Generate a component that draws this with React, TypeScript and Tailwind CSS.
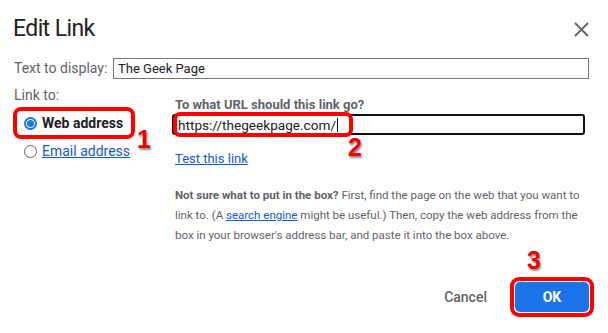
function Badge({ n, className }: { n: string; className: string }) {
  return (
    <span
      className={`absolute font-['Liberation_Sans',sans-serif] font-bold text-[25px] leading-none text-[#f00000] [-webkit-text-stroke:3px_white] [paint-order:stroke_fill] [text-shadow:1px_2px_2px_rgba(0,0,0,0.45)] ${className}`}
    >
      {n}
    </span>
  );
}

export default function App() {
  return (
    <div className="relative w-[608px] h-[333px] overflow-hidden bg-white font-['Roboto',sans-serif] text-[#202124]">
      {/* header */}
      <div className="flex h-[58px] items-start justify-between pl-[13px] pr-[19px] pt-[14px]">
        <h1 className="text-[23px] font-normal leading-[30px] tracking-[-0.6px] text-[#202124]">Edit Link</h1>
        <svg className="mt-[8px]" width="15" height="15" viewBox="0 0 15 15">
          <path d="M1 1L14 14M14 1L1 14" stroke="#5f6368" strokeWidth="1.8" />
        </svg>
      </div>

      {/* text to display */}
      <div className="flex items-center pl-[14px] pr-[19px]">
        <span className="w-[99px] text-[14px] leading-[21px] text-[#5f6368]">Text to display:</span>
        <div className="h-[21px] flex-1 border border-[#767676] px-[4px] text-[13px] leading-[19px] text-[#202124]">
          The Geek Page
        </div>
      </div>

      {/* body */}
      <div className="flex">
        <div className="w-[172px] pl-[13px]">
          <div className="mt-[8px] pl-[1px] text-[14px] leading-[16px] text-[#5f6368]">Link to:</div>
          <div className="relative mt-[4px] flex h-[32px] w-[122px] items-center gap-[5px] rounded-[8px] border-[4px] border-[#f00] pl-[7px]">
            <span className="flex h-[13px] w-[13px] items-center justify-center rounded-full border-2 border-[#1a73e8]">
              <span className="h-[7px] w-[7px] rounded-full bg-[#1a73e8]" />
            </span>
            <span className="text-[14px] font-bold leading-[18px] text-[#202124]">Web address</span>
            <Badge n="1" className="left-[120px] top-[16px]" />
          </div>
          <div className="mt-[2px] flex h-[20px] items-center gap-[5px] pl-[11px]">
            <span className="h-[13px] w-[13px] rounded-full border-[1.5px] border-[#5f6368]" />
            <span className="text-[14px] leading-[18px] text-[#1558d6] underline">Email address</span>
          </div>
        </div>

        <div className="w-[413px]">
          <div className="mt-[18px] pl-[3px] text-[13px] font-bold leading-[16px] text-[#5f6368]">
            To what URL should this link go?
          </div>
          <div className="relative mt-[1px] h-[21px] w-[413px] rounded-[3px] border-2 border-[#111] pl-[4px] text-[13.6px] leading-[17px] text-[#202124]">
            https://thegeekpage.com/<span className="ml-[1px] inline-block h-[14px] w-[1px] translate-y-[2px] bg-[#111]" />
            <span className="absolute left-[-1px] top-[-4px] h-[25px] w-[180px] rounded-[7px] border-[4px] border-[#f00]" />
            <Badge n="2" className="left-[174px] top-[19px]" />
          </div>
          <div className="mt-[16px] pl-[3px] text-[13px] leading-[16px] text-[#1558d6] underline">Test this link</div>
          <p className="mt-[18px] w-[412px] pl-[3px] text-[11.5px] leading-[20px] text-[#5f6368]">
            <b className="font-bold">Not sure what to put in the box?</b> First, find the page on the web that you want to
            link to. (A <span className="text-[#1558d6] underline">search engine</span> might be useful.) Then, copy the web
            address from the box in your browser's address bar, and paste it into the box above.
          </p>
        </div>
      </div>

      {/* footer */}
      <div className="mt-[32px] flex items-center justify-end gap-[23px] pr-[14px]">
        <span className="text-[14px] font-medium text-[#5f6368]">Cancel</span>
        <div className="relative rounded-[9px] border-[4px] border-[#f00] p-px">
          <div className="flex h-[30px] w-[74px] items-center justify-center rounded-[5px] bg-[#1a73e8] text-[14px] font-bold text-white">
            OK
          </div>
          <Badge n="3" className="left-[13px] top-[-33px]" />
        </div>
      </div>
    </div>
  );
}
